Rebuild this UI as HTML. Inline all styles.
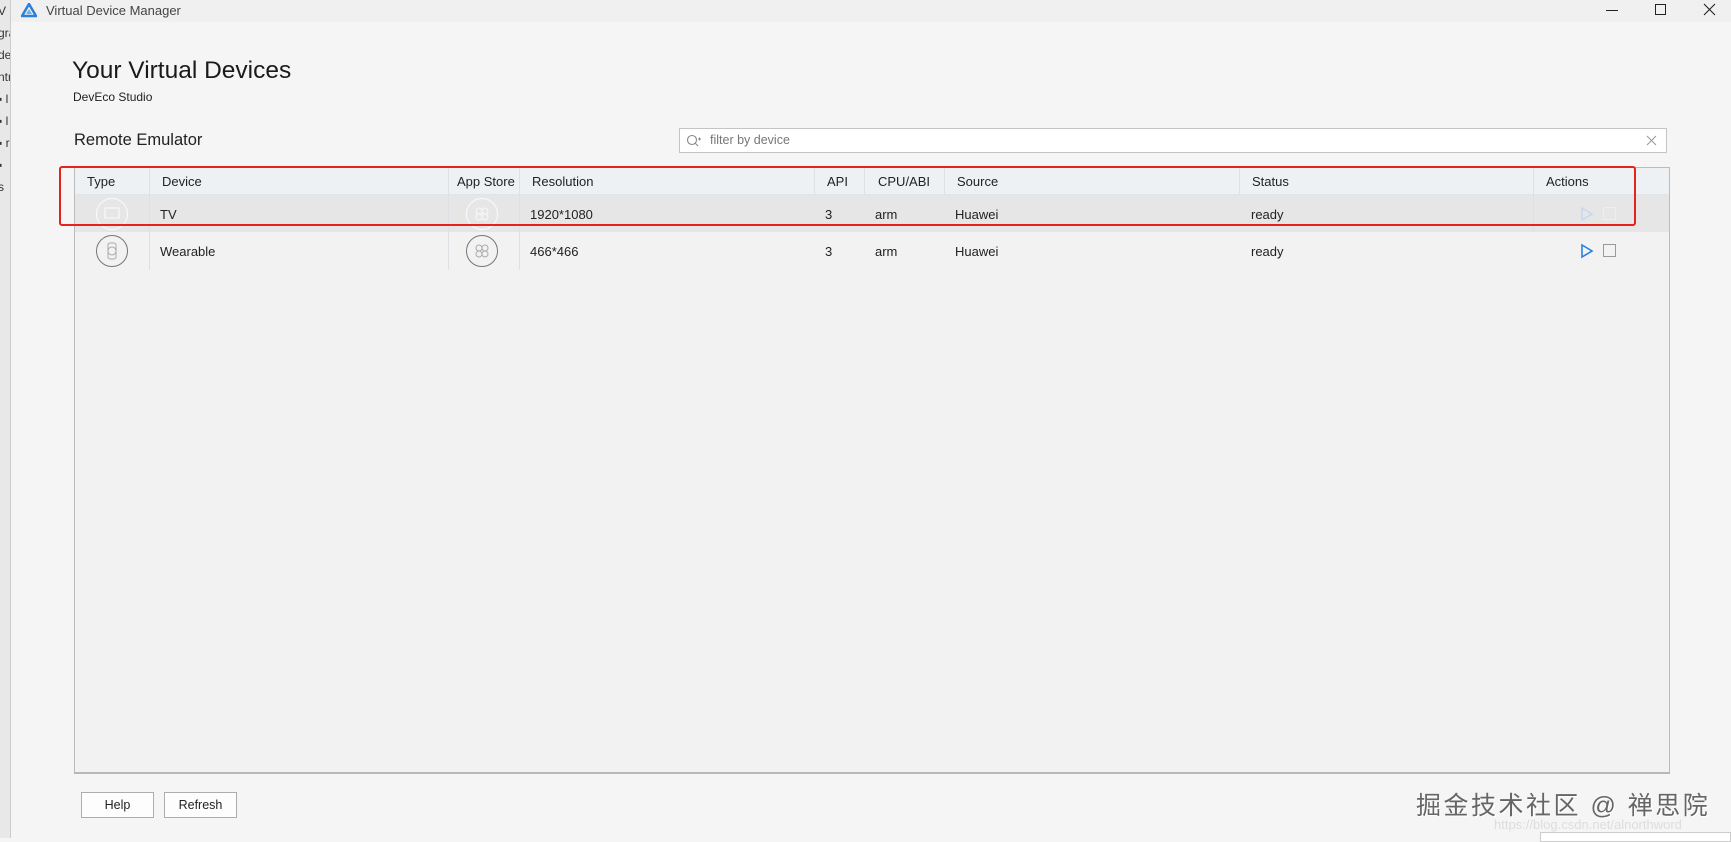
<!DOCTYPE html>
<html><head><meta charset="utf-8"><style>
*{margin:0;padding:0;box-sizing:border-box}
body{width:1731px;height:838px;overflow:hidden;background:#f5f5f5;font-family:"Liberation Sans","Noto Sans CJK SC",sans-serif;color:#222;position:relative}
.abs{position:absolute}
.strip{left:0;top:0;width:11px;height:838px;background:#e8e8e8;border-right:1px solid #ccc;overflow:hidden;font-size:12px;color:#333;line-height:22px}
.tb{left:11px;top:0;right:0;height:22px;background:#f0f0f0}
.t{font-size:13px;white-space:nowrap}
.hdr{left:75px;top:168px;width:1594px;height:27px;background:#eef1f4;border-bottom:1px solid #e0e4e8}
.row1{left:75px;top:195px;width:1594px;height:37px;background:#e6e6e6}
.vl{width:1px;background:#dde0e4}
.btn{height:26px;border:1px solid #adadad;background:#fdfdfd;font-size:12.5px;text-align:center;line-height:24px}
</style></head><body>
<div class="abs strip"><div style="margin-left:-2px">V<br>gra<br>de<br>ntr<br>▪ l<br>▪ l<br>▪ r<br>▪ s</div></div>
<div class="abs tb"></div>
<svg class="abs" style="left:21px;top:3px" width="16" height="15" viewBox="0 0 16 15"><path d="M8 1 L15 13 L1 13 Z" fill="none" stroke="#2a7fd6" stroke-width="2.5"/><path d="M8 6 L11 11 L5 11Z" fill="#6ab0f0"/></svg>
<div class="abs t" style="left:46px;top:3px;font-size:13px;color:#444">Virtual Device Manager</div>
<div class="abs" style="left:1606px;top:10px;width:12px;height:1px;background:#222"></div>
<div class="abs" style="left:1655px;top:4px;width:11px;height:11px;border:1px solid #222"></div>
<svg class="abs" style="left:1703px;top:3px" width="13" height="13"><path d="M1 1L12 12M12 1L1 12" stroke="#222" stroke-width="1.1"/></svg>

<div class="abs t" style="left:72px;top:57px;font-size:24.5px;color:#1a1a1a">Your Virtual Devices</div>
<div class="abs t" style="left:73px;top:90px;font-size:12px">DevEco Studio</div>
<div class="abs t" style="left:74px;top:131px;font-size:16.5px">Remote Emulator</div>
<div class="abs" style="left:679px;top:128px;width:988px;height:25px;background:#fff;border:1px solid #c4c4c4"></div>
<svg class="abs" style="left:686px;top:134px" width="16" height="14"><circle cx="6" cy="6" r="4.5" fill="none" stroke="#888" stroke-width="1.1"/><path d="M9.5 9.5L12 12M12 5h3M13.5 3.5v3" stroke="#888" stroke-width="1"/></svg>
<div class="abs t" style="left:710px;top:133px;font-size:12.5px;color:#777">filter by device</div>
<svg class="abs" style="left:1646px;top:135px" width="11" height="11"><path d="M1 1L10 10M10 1L1 10" stroke="#999" stroke-width="1"/></svg>

<div class="abs" style="left:74px;top:167px;width:1596px;height:607px;background:#f2f2f2;border:1px solid #bbb;border-bottom:2px solid #b8b8b8"></div>
<div class="abs hdr"></div>
<div class="abs row1"></div>
<div class="abs vl" style="left:149px;top:168px;height:102px"></div>
<div class="abs vl" style="left:448px;top:168px;height:102px"></div>
<div class="abs vl" style="left:519px;top:168px;height:102px"></div>
<div class="abs vl" style="left:814px;top:168px;height:27px"></div>
<div class="abs vl" style="left:864px;top:168px;height:27px"></div>
<div class="abs vl" style="left:944px;top:168px;height:27px"></div>
<div class="abs vl" style="left:1239px;top:168px;height:27px"></div>
<div class="abs vl" style="left:1533px;top:168px;height:64px"></div>

<div class="abs t" style="left:87px;top:174px">Type</div>
<div class="abs t" style="left:162px;top:174px">Device</div>
<div class="abs t" style="left:457px;top:174px">App Store</div>
<div class="abs t" style="left:532px;top:174px">Resolution</div>
<div class="abs t" style="left:827px;top:174px">API</div>
<div class="abs t" style="left:878px;top:174px">CPU/ABI</div>
<div class="abs t" style="left:957px;top:174px">Source</div>
<div class="abs t" style="left:1252px;top:174px">Status</div>
<div class="abs t" style="left:1546px;top:174px">Actions</div>

<div class="abs t" style="left:160px;top:207px">TV</div>
<div class="abs t" style="left:530px;top:207px">1920*1080</div>
<div class="abs t" style="left:825px;top:207px">3</div>
<div class="abs t" style="left:875px;top:207px">arm</div>
<div class="abs t" style="left:955px;top:207px">Huawei</div>
<div class="abs t" style="left:1251px;top:207px">ready</div>

<div class="abs t" style="left:160px;top:244px">Wearable</div>
<div class="abs t" style="left:530px;top:244px">466*466</div>
<div class="abs t" style="left:825px;top:244px">3</div>
<div class="abs t" style="left:875px;top:244px">arm</div>
<div class="abs t" style="left:955px;top:244px">Huawei</div>
<div class="abs t" style="left:1251px;top:244px">ready</div>

<svg class="abs" style="left:94px;top:196px" width="36" height="36"><circle cx="18" cy="18" r="15.5" fill="none" stroke="#f8f8f8" stroke-width="1.2"/><rect x="11" y="12" width="14" height="10" fill="none" stroke="#f8f8f8" stroke-width="1.2"/></svg>
<svg class="abs" style="left:94px;top:233px" width="36" height="36"><circle cx="18" cy="18" r="15.5" fill="none" stroke="#777" stroke-width="1"/><rect x="14" y="10" width="8" height="16" rx="2" fill="none" stroke="#aaa"/><circle cx="18" cy="18" r="4" fill="none" stroke="#aaa"/></svg>
<svg class="abs" style="left:464px;top:196px" width="36" height="36"><circle cx="18" cy="18" r="15.5" fill="none" stroke="#f8f8f8" stroke-width="1.2"/><g fill="none" stroke="#f8f8f8"><circle cx="15" cy="15" r="3"/><circle cx="21" cy="15" r="3"/><circle cx="15" cy="21" r="3"/><circle cx="21" cy="21" r="3"/></g></svg>
<svg class="abs" style="left:464px;top:233px" width="36" height="36"><circle cx="18" cy="18" r="15.5" fill="none" stroke="#777" stroke-width="1"/><g fill="none" stroke="#aaa"><circle cx="15" cy="15" r="3"/><circle cx="21" cy="15" r="3"/><circle cx="15" cy="21" r="3"/><circle cx="21" cy="21" r="3"/></g></svg>

<svg class="abs" style="left:1580px;top:206px" width="14" height="16"><path d="M2 2L12 8L2 14Z" fill="none" stroke="#c3d8f0" stroke-width="1.5"/></svg>
<div class="abs" style="left:1603px;top:207px;width:13px;height:13px;border:1px solid #eee"></div>
<svg class="abs" style="left:1580px;top:243px" width="14" height="16"><path d="M2 2L12 8L2 14Z" fill="none" stroke="#2a80e0" stroke-width="1.6"/></svg>
<div class="abs" style="left:1603px;top:244px;width:13px;height:13px;border:1px solid #999"></div>

<div class="abs" style="left:59px;top:166px;width:1577px;height:60px;border:2.5px solid #e5221b;border-radius:3px"></div>

<div class="abs btn" style="left:81px;top:792px;width:73px">Help</div>
<div class="abs btn" style="left:164px;top:792px;width:73px">Refresh</div>

<div class="abs t" style="left:1416px;top:786px;font-size:25px;color:#666;letter-spacing:2.5px;text-shadow:1px 1px 0 #fff">掘金技术社区 @ 禅思院</div>
<div class="abs t" style="left:1494px;top:817px;font-size:13px;color:#ddd">https://blog.csdn.net/alnorthword</div>
<div class="abs" style="left:1540px;top:832px;width:191px;height:10px;background:#fff;border:1px solid #ccc"></div>
</body></html>
